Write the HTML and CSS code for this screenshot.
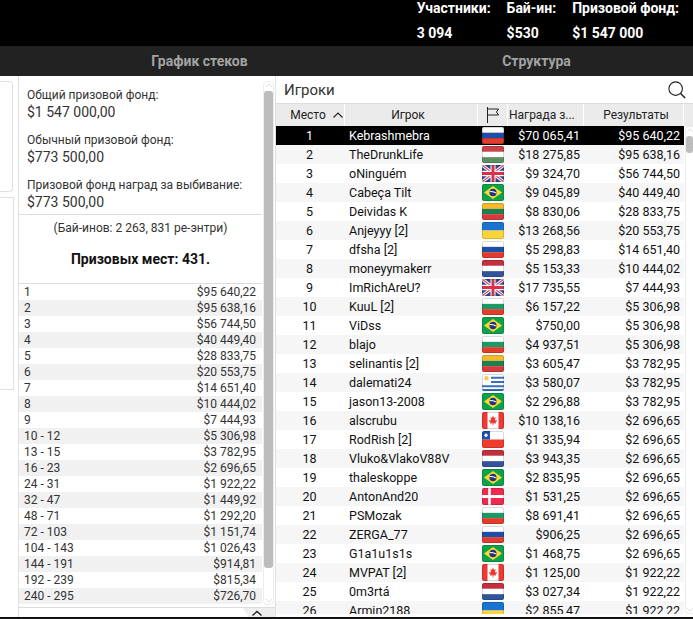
FILE: index.html
```html
<!DOCTYPE html>
<html lang="en">
<head>
    <meta charset="UTF-8">
    <meta name="viewport" content="width=device-width, initial-scale=1.0">
    <title>Игроки</title>
    <link rel="stylesheet" href="styles.css">
</head>
<body>
    <!-- flags used by the player table -->
    <svg class="sprites" xmlns="http://www.w3.org/2000/svg">
        <symbol id="ru" viewBox="0 0 22 16" preserveAspectRatio="none"><rect width="22" height="5.5" fill="#fff"/><rect y="5.5" width="22" height="5" fill="#1c4fa8"/><rect y="10.5" width="22" height="5.5" fill="#e03c31"/></symbol>
        <symbol id="hu" viewBox="0 0 22 16" preserveAspectRatio="none"><rect width="22" height="5.5" fill="#c8424a"/><rect y="5.5" width="22" height="5" fill="#fff"/><rect y="10.5" width="22" height="5.5" fill="#5c8f62"/></symbol>
        <symbol id="lt" viewBox="0 0 22 16" preserveAspectRatio="none"><rect width="22" height="5.5" fill="#f5b92e"/><rect y="5.5" width="22" height="5" fill="#1e8050"/><rect y="10.5" width="22" height="5.5" fill="#d23c3c"/></symbol>
        <symbol id="nl" viewBox="0 0 22 16" preserveAspectRatio="none"><rect width="22" height="5.5" fill="#c23040"/><rect y="5.5" width="22" height="5" fill="#fff"/><rect y="10.5" width="22" height="5.5" fill="#33549c"/></symbol>
        <symbol id="bg" viewBox="0 0 22 16" preserveAspectRatio="none"><rect width="22" height="5.5" fill="#fff"/><rect y="5.5" width="22" height="5" fill="#1b9a68"/><rect y="10.5" width="22" height="5.5" fill="#e23c2a"/></symbol>
        <symbol id="ua" viewBox="0 0 22 16" preserveAspectRatio="none"><rect width="22" height="8" fill="#1a73d0"/><rect y="8" width="22" height="8" fill="#fdd33c"/></symbol>
        <symbol id="br" viewBox="0 0 22 16" preserveAspectRatio="none"><rect width="22" height="16" fill="#0ca24a"/><path d="M11 1.8 20 8 11 14.2 2 8z" fill="#fbd92e"/><circle cx="11" cy="8" r="3.6" fill="#22357f"/><path d="M7.6 7.2q3.6-.6 6.8 1.4" stroke="#fff" fill="none"/></symbol>
        <symbol id="gb" viewBox="0 0 22 16" preserveAspectRatio="none"><rect width="22" height="16" fill="#2c4a94"/><path d="M0 0 22 16M22 0 0 16" stroke="#fff" stroke-width="3"/><path d="M0 0 22 16M22 0 0 16" stroke="#d8324a" stroke-width="1"/><path d="M11 0V16M0 8H22" stroke="#fff" stroke-width="5"/><path d="M11 0V16M0 8H22" stroke="#d8324a" stroke-width="3"/></symbol>
        <symbol id="uy" viewBox="0 0 22 16" preserveAspectRatio="none"><rect width="22" height="16" fill="#fff"/><path d="M0 3.5H22M0 7.5H22M0 11.5H22M0 15H22" stroke="#3a6fc0" stroke-width="1.8"/><rect width="9" height="8.5" fill="#fff"/><circle cx="4.5" cy="4" r="2.2" fill="#f7c948"/></symbol>
        <symbol id="ca" viewBox="0 0 22 16" preserveAspectRatio="none"><rect width="22" height="16" fill="#fff"/><rect width="5.5" height="16" fill="#ee3a34"/><rect x="16.5" width="5.5" height="16" fill="#ee3a34"/><path d="M11 3.5 12 5.5 13.5 5 13 8 14.5 7.5 15 8.5 13.5 10 13.8 11 11.4 10.7V12.5H10.6V10.7L8.2 11 8.5 10 7 8.5 7.5 7.5 9 8 8.5 5 10 5.5z" fill="#ee3a34"/></symbol>
        <symbol id="cl" viewBox="0 0 22 16" preserveAspectRatio="none"><rect width="22" height="8" fill="#fff"/><rect y="8" width="22" height="8" fill="#ee3d2c"/><rect width="8" height="8" fill="#1f4fb0"/><circle cx="4" cy="4" r="1.6" fill="#fff"/></symbol>
        <symbol id="dk" viewBox="0 0 22 16" preserveAspectRatio="none"><rect width="22" height="16" fill="#ee2a50"/><path d="M7.5 0V16M0 8H22" stroke="#fff" stroke-width="2.6"/></symbol>
    </svg>

    <header class="stats">
        <div class="stat">
            <span class="stat-label">Участники:</span>
            <span class="stat-value">3 094</span>
        </div>
        <div class="stat">
            <span class="stat-label">Бай-ин:</span>
            <span class="stat-value">$530</span>
        </div>
        <div class="stat">
            <span class="stat-label">Призовой фонд:</span>
            <span class="stat-value">$1 547 000</span>
        </div>
    </header>

    <nav class="tabs">
        <a class="tab">График стеков</a>
        <a class="tab">Структура</a>
    </nav>

    <main class="content">
        <div class="stubs">
            <div class="stub stub-top"></div>
            <div class="stub stub-bottom"></div>
        </div>

        <section class="prizes">
            <div class="prizes-body">
                <div class="prizes-scroll">
                    <div class="funds">
                        <div class="fund">
                            <div class="fund-label">Общий призовой фонд:</div>
                            <div class="fund-value">$1 547 000,00</div>
                        </div>
                        <div class="fund">
                            <div class="fund-label">Обычный призовой фонд:</div>
                            <div class="fund-value">$773 500,00</div>
                        </div>
                        <div class="fund">
                            <div class="fund-label">Призовой фонд наград за выбивание:</div>
                            <div class="fund-value">$773 500,00</div>
                        </div>
                    </div>
                    <div class="summary">
                        <div class="summary-note">(Бай-инов: 2 263, 831 ре-энтри)</div>
                        <div class="summary-total">Призовых мест: 431.</div>
                    </div>
                    <div class="payouts">
                        <div class="payout"><span>1</span><span>$95 640,22</span></div>
                        <div class="payout"><span>2</span><span>$95 638,16</span></div>
                        <div class="payout"><span>3</span><span>$56 744,50</span></div>
                        <div class="payout"><span>4</span><span>$40 449,40</span></div>
                        <div class="payout"><span>5</span><span>$28 833,75</span></div>
                        <div class="payout"><span>6</span><span>$20 553,75</span></div>
                        <div class="payout"><span>7</span><span>$14 651,40</span></div>
                        <div class="payout"><span>8</span><span>$10 444,02</span></div>
                        <div class="payout"><span>9</span><span>$7 444,93</span></div>
                        <div class="payout"><span>10 - 12</span><span>$5 306,98</span></div>
                        <div class="payout"><span>13 - 15</span><span>$3 782,95</span></div>
                        <div class="payout"><span>16 - 23</span><span>$2 696,65</span></div>
                        <div class="payout"><span>24 - 31</span><span>$1 922,22</span></div>
                        <div class="payout"><span>32 - 47</span><span>$1 449,92</span></div>
                        <div class="payout"><span>48 - 71</span><span>$1 292,20</span></div>
                        <div class="payout"><span>72 - 103</span><span>$1 151,74</span></div>
                        <div class="payout"><span>104 - 143</span><span>$1 026,43</span></div>
                        <div class="payout"><span>144 - 191</span><span>$914,81</span></div>
                        <div class="payout"><span>192 - 239</span><span>$815,34</span></div>
                        <div class="payout"><span>240 - 295</span><span>$726,70</span></div>
                    </div>
                </div>
                <div class="scrollbar scrollbar-prizes">
                    <svg class="scroll-arrow" viewBox="0 0 10 8"><path d="M1 6 5 2 9 6" fill="none" stroke="#d4d4d4"/></svg>
                    <div class="scroll-thumb"></div>
                    <svg class="scroll-arrow" viewBox="0 0 10 8"><path d="M1 2 5 6 9 2" fill="none" stroke="#d4d4d4"/></svg>
                </div>
            </div>
            <div class="prizes-foot">
                <div class="collapse">
                    <svg viewBox="0 0 12 7"><path d="M1.5 5.5 6 1.5 10.5 5.5" fill="none" stroke="#222" stroke-width="1.4"/></svg>
                </div>
            </div>
        </section>

        <section class="players">
            <div class="players-top">
                <h2 class="players-title">Игроки</h2>
                <svg class="search" viewBox="0 0 20 20"><circle cx="8.5" cy="8.5" r="7.5" fill="none" stroke="#222" stroke-width="1.2"/><path d="M14 14 19 19" stroke="#222" stroke-width="1.6"/></svg>
            </div>
            <div class="table-head">
                <div class="th th-place">Место <svg class="sort" viewBox="0 0 10 6"><path d="M.5 5.5 5 1 9.5 5.5" fill="none" stroke="#222" stroke-width="1.1"/></svg></div>
                <div class="th th-player">Игрок</div>
                <div class="th"><svg class="flag-icon" viewBox="0 0 14 16"><path d="M1.5 0V16M1.5 2H12.5L10.5 5 12.5 8H1.5" fill="none" stroke="#222"/></svg></div>
                <div class="th th-prize">Награда з...</div>
                <div class="th th-result">Результаты</div>
            </div>
            <div class="table-body">
                <div class="rows">
                    <div class="row row-active"><span class="place">1</span><span class="name">Kebrashmebra</span><svg class="flag"><use href="#ru"/></svg><span class="num">$70 065,41</span><span class="num">$95 640,22</span></div>
                    <div class="row"><span class="place">2</span><span class="name">TheDrunkLife</span><svg class="flag"><use href="#hu"/></svg><span class="num">$18 275,85</span><span class="num">$95 638,16</span></div>
                    <div class="row"><span class="place">3</span><span class="name">oNinguém</span><svg class="flag"><use href="#gb"/></svg><span class="num">$9 324,70</span><span class="num">$56 744,50</span></div>
                    <div class="row"><span class="place">4</span><span class="name">Cabeça Tilt</span><svg class="flag"><use href="#br"/></svg><span class="num">$9 045,89</span><span class="num">$40 449,40</span></div>
                    <div class="row"><span class="place">5</span><span class="name">Deividas K</span><svg class="flag"><use href="#lt"/></svg><span class="num">$8 830,06</span><span class="num">$28 833,75</span></div>
                    <div class="row"><span class="place">6</span><span class="name">Anjeyyy [2]</span><svg class="flag"><use href="#ua"/></svg><span class="num">$13 268,56</span><span class="num">$20 553,75</span></div>
                    <div class="row"><span class="place">7</span><span class="name">dfsha [2]</span><svg class="flag"><use href="#ru"/></svg><span class="num">$5 298,83</span><span class="num">$14 651,40</span></div>
                    <div class="row"><span class="place">8</span><span class="name">moneyymakerr</span><svg class="flag"><use href="#nl"/></svg><span class="num">$5 153,33</span><span class="num">$10 444,02</span></div>
                    <div class="row"><span class="place">9</span><span class="name">ImRichAreU?</span><svg class="flag"><use href="#gb"/></svg><span class="num">$17 735,55</span><span class="num">$7 444,93</span></div>
                    <div class="row"><span class="place">10</span><span class="name">KuuL [2]</span><svg class="flag"><use href="#bg"/></svg><span class="num">$6 157,22</span><span class="num">$5 306,98</span></div>
                    <div class="row"><span class="place">11</span><span class="name">ViDss</span><svg class="flag"><use href="#br"/></svg><span class="num">$750,00</span><span class="num">$5 306,98</span></div>
                    <div class="row"><span class="place">12</span><span class="name">blajo</span><svg class="flag"><use href="#bg"/></svg><span class="num">$4 937,51</span><span class="num">$5 306,98</span></div>
                    <div class="row"><span class="place">13</span><span class="name">selinantis [2]</span><svg class="flag"><use href="#lt"/></svg><span class="num">$3 605,47</span><span class="num">$3 782,95</span></div>
                    <div class="row"><span class="place">14</span><span class="name">dalemati24</span><svg class="flag"><use href="#uy"/></svg><span class="num">$3 580,07</span><span class="num">$3 782,95</span></div>
                    <div class="row"><span class="place">15</span><span class="name">jason13-2008</span><svg class="flag"><use href="#br"/></svg><span class="num">$2 296,88</span><span class="num">$3 782,95</span></div>
                    <div class="row"><span class="place">16</span><span class="name">alscrubu</span><svg class="flag"><use href="#ca"/></svg><span class="num">$10 138,16</span><span class="num">$2 696,65</span></div>
                    <div class="row"><span class="place">17</span><span class="name">RodRish [2]</span><svg class="flag"><use href="#cl"/></svg><span class="num">$1 335,94</span><span class="num">$2 696,65</span></div>
                    <div class="row"><span class="place">18</span><span class="name">Vluko&amp;VlakoV88V</span><svg class="flag"><use href="#nl"/></svg><span class="num">$3 943,35</span><span class="num">$2 696,65</span></div>
                    <div class="row"><span class="place">19</span><span class="name">thaleskoppe</span><svg class="flag"><use href="#br"/></svg><span class="num">$2 835,95</span><span class="num">$2 696,65</span></div>
                    <div class="row"><span class="place">20</span><span class="name">AntonAnd20</span><svg class="flag"><use href="#dk"/></svg><span class="num">$1 531,25</span><span class="num">$2 696,65</span></div>
                    <div class="row"><span class="place">21</span><span class="name">PSMozak</span><svg class="flag"><use href="#bg"/></svg><span class="num">$8 691,41</span><span class="num">$2 696,65</span></div>
                    <div class="row"><span class="place">22</span><span class="name">ZERGA_77</span><svg class="flag"><use href="#ru"/></svg><span class="num">$906,25</span><span class="num">$2 696,65</span></div>
                    <div class="row"><span class="place">23</span><span class="name">G1a1u1s1s</span><svg class="flag"><use href="#br"/></svg><span class="num">$1 468,75</span><span class="num">$2 696,65</span></div>
                    <div class="row"><span class="place">24</span><span class="name">MVPAT [2]</span><svg class="flag"><use href="#ca"/></svg><span class="num">$1 125,00</span><span class="num">$1 922,22</span></div>
                    <div class="row"><span class="place">25</span><span class="name">0m3rtá</span><svg class="flag"><use href="#nl"/></svg><span class="num">$3 027,34</span><span class="num">$1 922,22</span></div>
                    <div class="row"><span class="place">26</span><span class="name">Armin2188</span><svg class="flag"><use href="#ua"/></svg><span class="num">$2 855,47</span><span class="num">$1 922,22</span></div>
                </div>
                <div class="scrollbar scrollbar-players">
                    <svg class="scroll-arrow" viewBox="0 0 10 8"><path d="M1 6 5 2 9 6" fill="none" stroke="#d4d4d4"/></svg>
                    <div class="scroll-thumb"></div>
                    <svg class="scroll-arrow" viewBox="0 0 10 8"><path d="M1 2 5 6 9 2" fill="none" stroke="#d4d4d4"/></svg>
                </div>
            </div>
        </section>
    </main>
</body>
</html>
```

FILE: styles.css
```css
/* Base styles */
* {
    margin: 0;
    padding: 0;
    box-sizing: border-box;
    font-family: 'Roboto', sans-serif;
}

body {
    width: 693px;
    height: 619px;
    overflow: hidden;
    background-color: #ffffff;
    color: #222222;
    display: flex;
    flex-direction: column;
    border-bottom: 2px solid #111111;
}

.sprites {
    display: none;
}

/* Top stats */
.stats {
    height: 46px;
    flex-shrink: 0;
    background: #000000;
    color: #ffffff;
    display: flex;
    justify-content: flex-end;
    gap: 16px;
    padding-right: 14px;
}

.stat {
    display: flex;
    flex-direction: column;
    font-size: 14px;
    font-weight: 700;
}

.stat-label {
    height: 16px;
    line-height: 16px;
}

.stat-value {
    margin-top: 9px;
    line-height: 16px;
}

/* Tabs */
.tabs {
    height: 30px;
    flex-shrink: 0;
    background: #222222;
    display: flex;
    padding-left: 31px;
    overflow: hidden;
}

.tab {
    flex: 0 0 337px;
    line-height: 30px;
    text-align: center;
    font-size: 14px;
    font-weight: 700;
    color: #a3a3a3;
}

/* Main area */
.content {
    flex: 1;
    min-height: 0;
    display: flex;
}

.stubs {
    width: 18px;
    flex-shrink: 0;
    padding-top: 5px;
    display: flex;
    flex-direction: column;
    gap: 5px;
}

.stub {
    width: 13px;
    background: #ffffff;
    border: 1px solid #e0e0e0;
    border-left: none;
}

.stub-top {
    height: 111px;
    border-radius: 0 4px 4px 0;
}

.stub-bottom {
    width: 14px;
    height: 193px;
}

/* Prize panel */
.prizes {
    width: 258px;
    flex-shrink: 0;
    border-left: 1px solid #e0e0e0;
    border-right: 1px solid #e0e0e0;
    display: flex;
    flex-direction: column;
}

.prizes-body {
    flex: 1;
    min-height: 0;
    display: flex;
}

.prizes-scroll {
    width: 243px;
    flex-shrink: 0;
}

.funds {
    padding: 11px 8px 0 8px;
    height: 139px;
    border-bottom: 1px solid #dcdcdc;
}

.fund {
    height: 45px;
}

.fund-label {
    font-size: 12px;
    line-height: 16px;
    color: #333333;
}

.fund-value {
    font-size: 14px;
    line-height: 19px;
    color: #333333;
}

.summary {
    height: 69px;
    border-bottom: 1px solid #dcdcdc;
    text-align: center;
}

.summary-note {
    padding-top: 5px;
    font-size: 12px;
    line-height: 16px;
    color: #333333;
}

.summary-total {
    margin-top: 15px;
    font-size: 14px;
    line-height: 16px;
    font-weight: 700;
    color: #111111;
}

.payout {
    height: 16px;
    padding: 0 6px 0 5px;
    display: flex;
    justify-content: space-between;
    font-size: 12px;
    line-height: 16px;
    color: #333333;
}

.payout:nth-child(even) {
    background: #f1f1f1;
}

.prizes-foot {
    height: 10px;
    flex-shrink: 0;
    border-top: 1px solid #dcdcdc;
    position: relative;
}

.collapse {
    position: absolute;
    right: 0;
    top: 0;
    width: 40px;
    height: 9px;
    background: #eeeeee;
    clip-path: polygon(8px 0, 100% 0, 100% 100%, 14px 100%);
}

.collapse svg {
    position: absolute;
    left: 16px;
    top: 2px;
    width: 12px;
    height: 7px;
}

/* Scrollbars */
.scrollbar {
    width: 11px;
    flex-shrink: 0;
    border: 1px solid #ececec;
    border-radius: 4px;
    display: flex;
    flex-direction: column;
    align-items: center;
    justify-content: space-between;
}

.scrollbar-prizes {
    margin: 5px 0 2px 1px;
    height: 524px;
}

.scrollbar-players {
    margin-left: 1px;
    width: 8px;
    border-right: none;
    border-radius: 4px 0 0 4px;
}

.scroll-arrow {
    width: 8px;
    height: 7px;
    flex-shrink: 0;
}

.scroll-thumb {
    width: 9px;
    flex: 0 0 477px;
    margin-top: 2px;
    margin-bottom: auto;
    background: #bdbdbd;
    border-radius: 3px;
}

.scrollbar-players .scroll-thumb {
    flex: 0 0 17px;
    width: 7px;
}

/* Players table */
.players {
    flex: 1;
    min-width: 0;
    display: flex;
    flex-direction: column;
}

.players-top {
    height: 27px;
    flex-shrink: 0;
    padding: 0 7px 0 8px;
    display: flex;
    align-items: center;
    justify-content: space-between;
}

.players-title {
    font-size: 15px;
    font-weight: 400;
    color: #333333;
}

.search {
    width: 18px;
    height: 18px;
}

.table-head {
    height: 23px;
    flex-shrink: 0;
    background: #ebebeb;
    border-top: 1px solid #dddddd;
    display: grid;
    grid-template-columns: 69px 133px 30px 76px 100px;
}

.th {
    border-right: 1px solid #ffffff;
    font-size: 12px;
    line-height: 22px;
    color: #222222;
    display: flex;
    align-items: center;
    justify-content: center;
}

.th-place {
    gap: 7px;
    padding-left: 13px;
}

.th-player {
    padding-right: 6px;
}

.th-prize {
    justify-content: flex-start;
    padding-left: 1px;
    white-space: nowrap;
}

.th-result {
    padding-left: 5px;
}

.sort {
    width: 10px;
    height: 6px;
}

.flag-icon {
    width: 14px;
    height: 16px;
}

.table-body {
    flex: 1;
    min-height: 0;
    display: flex;
    padding-bottom: 3px;
}

.rows {
    width: 408px;
    flex-shrink: 0;
    overflow: hidden;
}

.row {
    height: 19px;
    display: grid;
    grid-template-columns: 69px 133px 30px 76px 100px;
    align-items: center;
    font-size: 12.5px;
    color: #111111;
}

.row:nth-child(even) {
    background: #f6f6f6;
}

.row-active {
    background: #000000;
    color: #ffffff;
}

.place {
    text-align: center;
    padding-right: 2px;
}

.name {
    padding-left: 4px;
    white-space: nowrap;
}

.flag {
    width: 22px;
    height: 17px;
    margin-left: 4px;
    border-radius: 2px;
    outline: 1px solid rgba(0, 0, 0, 0.15);
    outline-offset: -1px;
}

.num {
    text-align: right;
    padding-right: 4px;
}
```
